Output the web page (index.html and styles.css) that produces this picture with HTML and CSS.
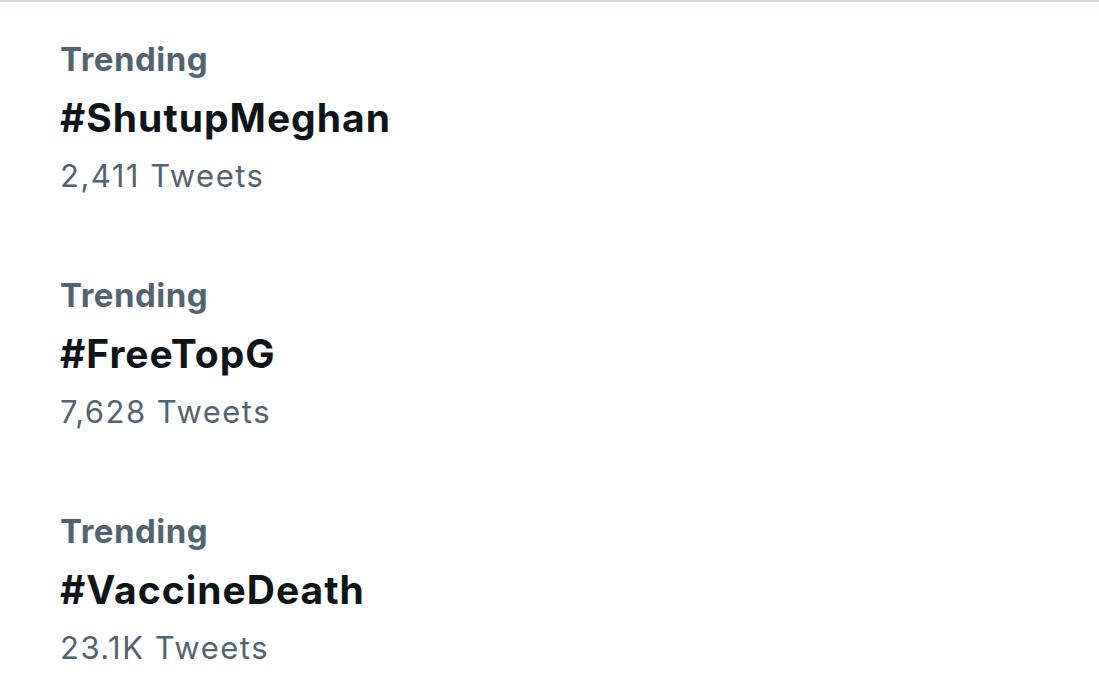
FILE: index.html
```html
<!DOCTYPE html>
<html>
<head>
<meta charset="utf-8">
<link rel="stylesheet" href="styles.css">
</head>
<body>
<div class="list">
  <div class="trend">
    <div class="label">Trending</div>
    <div class="tag">#ShutupMeghan</div>
    <div class="count">2,411 Tweets</div>
  </div>
  <div class="trend">
    <div class="label">Trending</div>
    <div class="tag">#FreeTopG</div>
    <div class="count">7,628 Tweets</div>
  </div>
  <div class="trend">
    <div class="label">Trending</div>
    <div class="tag">#VaccineDeath</div>
    <div class="count">23.1K Tweets</div>
  </div>
</div>
</body>
</html>
```
FILE: styles.css
```css
html, body {
  margin: 0;
  padding: 0;
  background: #ffffff;
}
body {
  font-family: Inter, "Noto Sans", sans-serif;
  width: 1099px;
  height: 700px;
  overflow: hidden;
}
.list {
  border-top: 2px solid #cfd9de;
  padding-left: 60px;
  padding-top: 33px;
  display: flex;
  flex-direction: column;
  gap: 71px;
}
.trend {
  display: flex;
  flex-direction: column;
}
.label {
  font-size: 33px;
  font-weight: 700;
  color: #536471;
  line-height: 48px;
  letter-spacing: 0.5px;
}
.tag {
  margin-top: 2px;
  font-size: 39px;
  font-weight: 700;
  color: #0f1419;
  line-height: 66px;
  letter-spacing: 1px;
}
.count {
  margin-top: 1px;
  font-size: 31px;
  font-weight: 400;
  color: #536471;
  line-height: 48px;
  letter-spacing: 1.5px;
}
```
